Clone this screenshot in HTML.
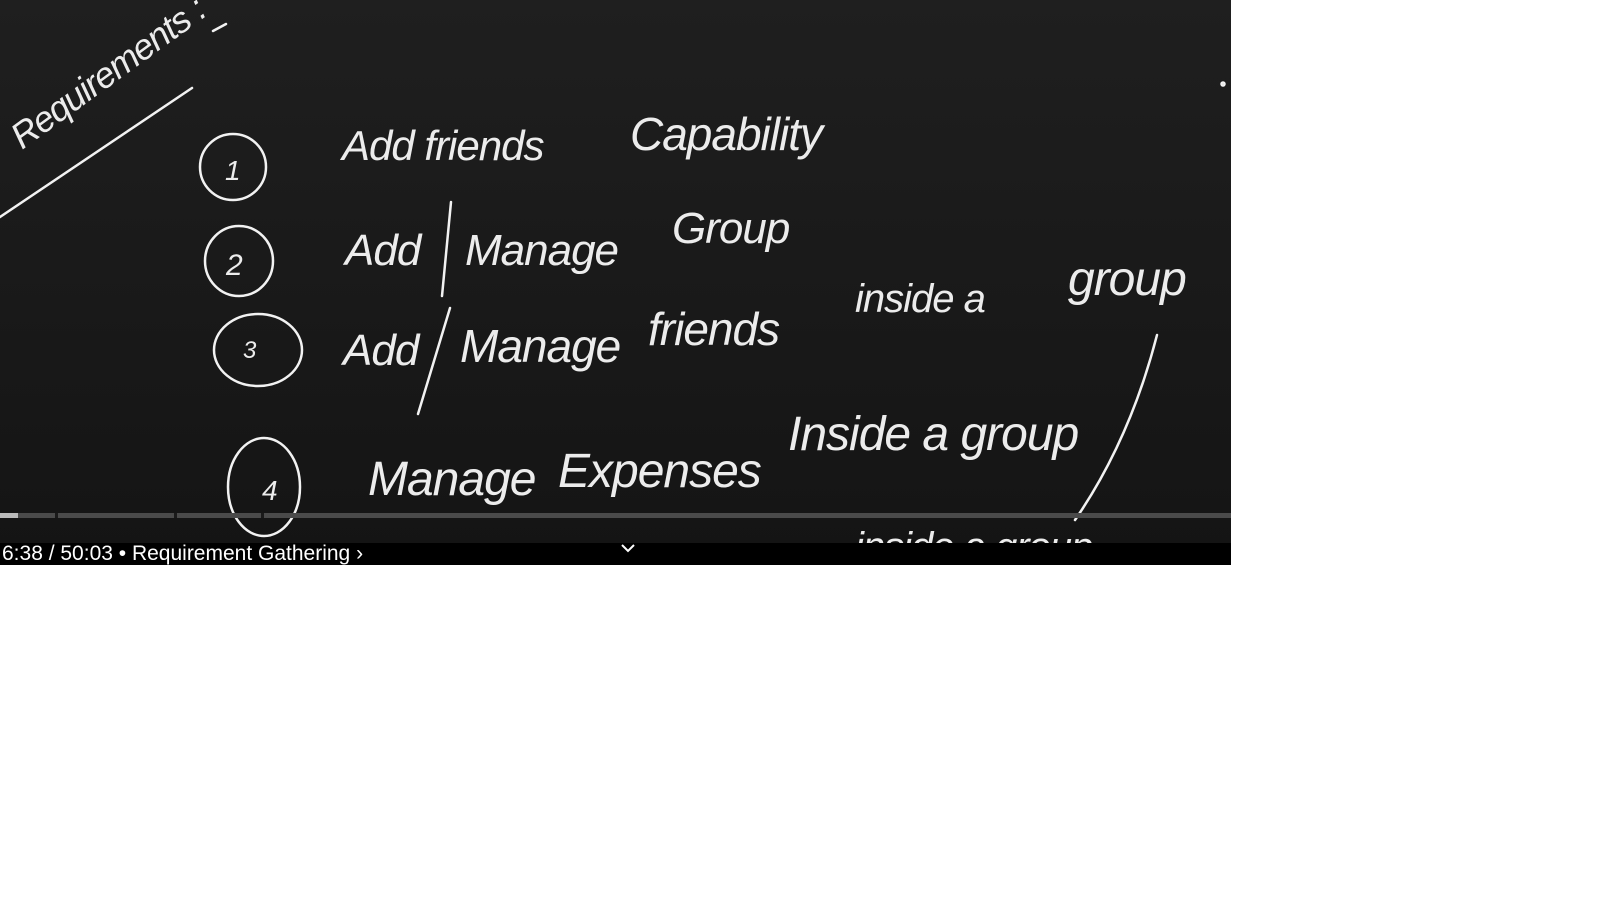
<!DOCTYPE html>
<html><head><meta charset="utf-8"><style>
body{margin:0;background:#fff;width:1607px;height:902px;overflow:hidden;font-family:"Liberation Sans",sans-serif}
#v{position:absolute;left:0;top:0;width:1231px;height:565px;background:linear-gradient(#1f1f1f,#141414);overflow:hidden}
#bar{position:absolute;left:0;top:543px;width:1231px;height:22px;background:#000;color:#fff;font-size:21px;line-height:20px}
</style></head><body>
<div id="v">
<svg width="1231" height="565" style="position:absolute;left:0;top:0">
<g fill="none" stroke="#f2f2f2" stroke-width="2.5" stroke-linecap="round">
<path d="M0 217 L192 88"/>
<path d="M213 31 L226 24"/>
<ellipse cx="233" cy="167" rx="33" ry="33"/>
<ellipse cx="239" cy="261" rx="34" ry="35"/>
<ellipse cx="258" cy="350" rx="44" ry="36"/>
<ellipse cx="264" cy="487" rx="36" ry="49"/>
<path d="M451 202 L442 296"/>
<path d="M450 308 L418 414"/>
<path d="M1157 335 Q1130 440 1075 520"/>
<circle cx="1223" cy="84" r="1.5"/>
</g>
<g fill="#ececec" font-family="Liberation Sans,sans-serif" font-style="italic" letter-spacing="-1">
<text x="22" y="150" font-size="36" transform="rotate(-36 22 150)">Requirements :</text>
<text x="225" y="180" font-size="28">1</text>
<text x="226" y="275" font-size="30">2</text>
<text x="243" y="358" font-size="24">3</text>
<text x="262" y="500" font-size="28">4</text>
<text x="342" y="160" font-size="42">Add friends</text>
<text x="630" y="150" font-size="46">Capability</text>
<text x="345" y="265" font-size="44">Add</text>
<text x="465" y="265" font-size="44">Manage</text>
<text x="672" y="243" font-size="44">Group</text>
<text x="343" y="365" font-size="44">Add</text>
<text x="460" y="362" font-size="46">Manage</text>
<text x="648" y="345" font-size="46">friends</text>
<text x="855" y="312" font-size="40">inside a</text>
<text x="1068" y="295" font-size="48">group</text>
<text x="368" y="495" font-size="48">Manage</text>
<text x="558" y="487" font-size="48">Expenses</text>
<text x="788" y="450" font-size="48">Inside a group</text>
<text x="855" y="560" font-size="40">inside a group</text>
</g>
<rect x="0" y="513" width="1231" height="5" fill="#4a4a4a"/>
<rect x="0" y="513" width="18" height="5" fill="#bbb"/>
<rect x="55" y="513" width="3" height="5" fill="#1a1a1a"/>
<rect x="174" y="513" width="3" height="5" fill="#1a1a1a"/>
<rect x="261" y="513" width="3" height="5" fill="#1a1a1a"/>
</svg>
<div id="bar"><span style="position:absolute;left:2px;top:1px">6:38 / 50:03 • Requirement Gathering ›</span>
<svg style="position:absolute;left:620px;top:0" width="16" height="12"><path d="M2 2 L8 8 L14 2" stroke="#fff" stroke-width="2" fill="none"/></svg></div>
</div>
</body></html>
